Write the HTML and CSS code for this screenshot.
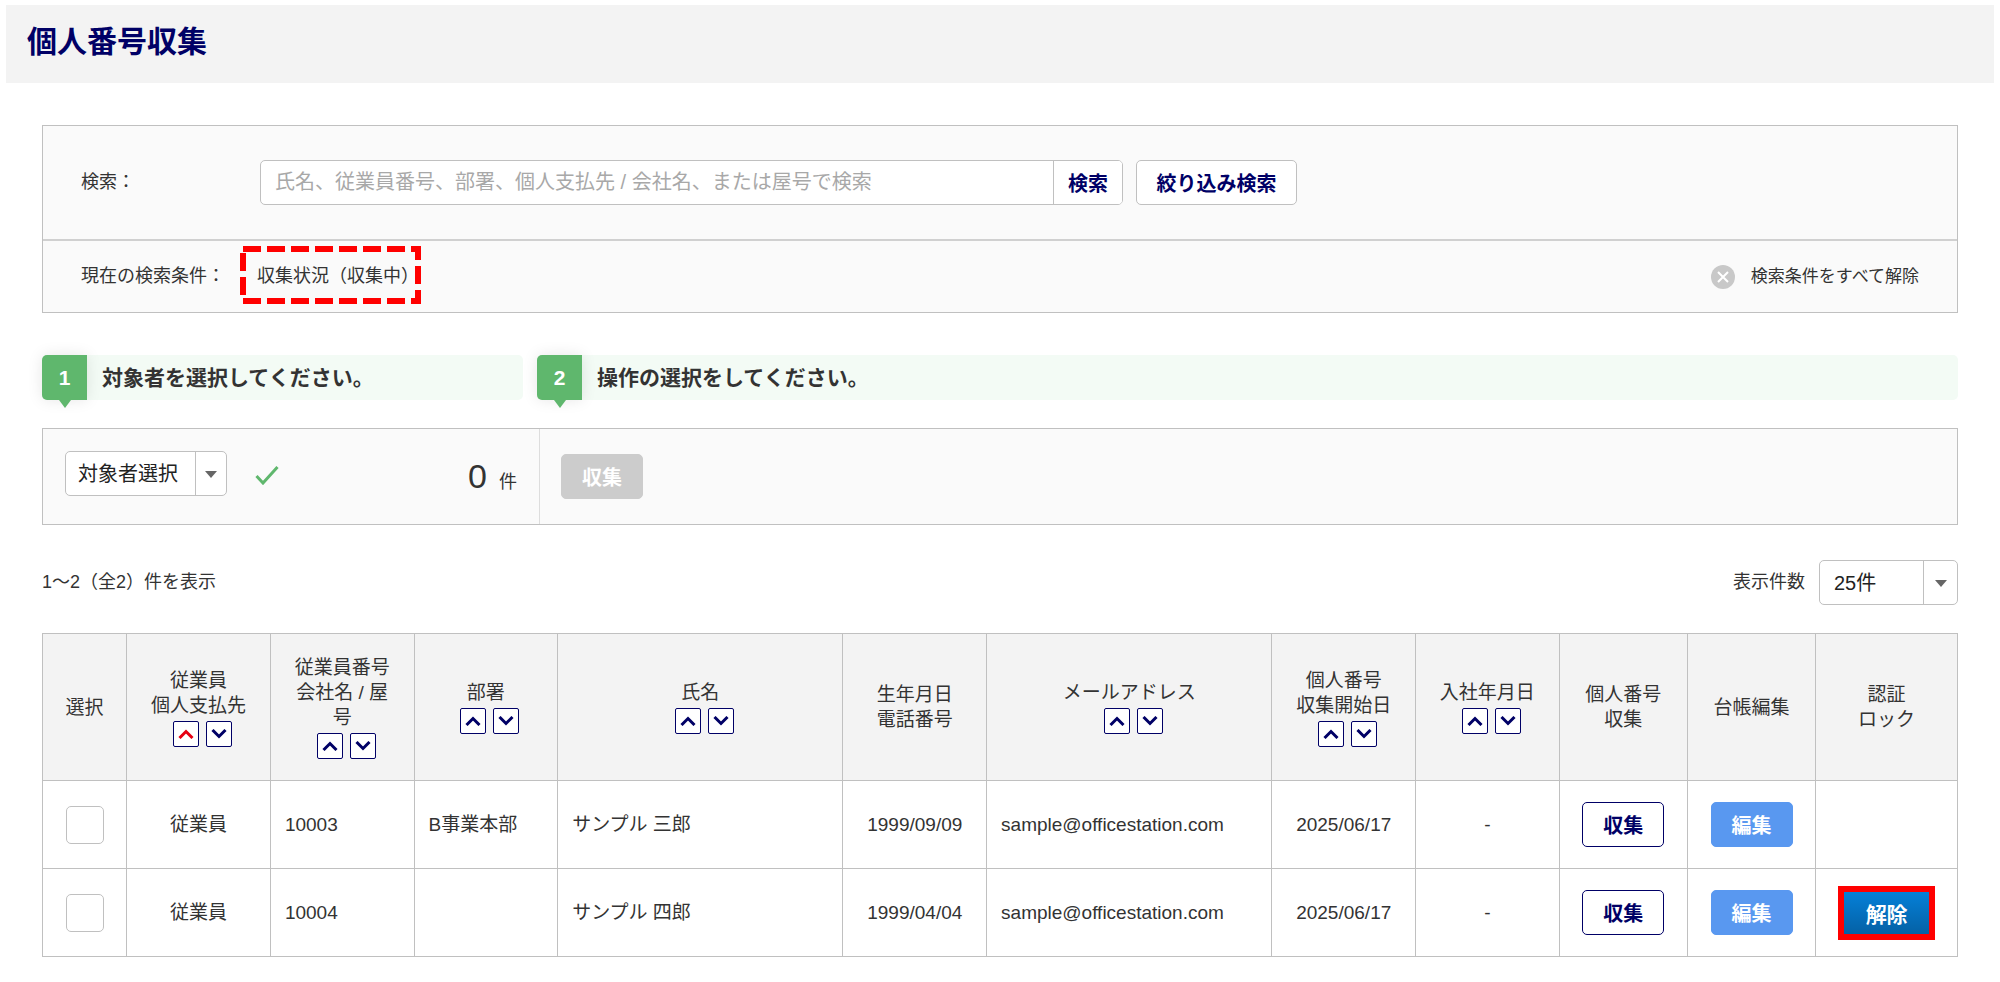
FILE: index.html
```html
<!DOCTYPE html>
<html lang="ja">
<head>
    <meta charset="UTF-8">
    <meta name="viewport" content="width=device-width, initial-scale=1.0">
    <title>個人番号収集</title>
    <link rel="stylesheet" href="styles.css">
</head>
<body>
    <header class="page-header">
        <h1>個人番号収集</h1>
    </header>

    <main class="content">
        <section class="search-box">
            <form class="search-row">
                <label class="search-label" for="keyword">検索：</label>
                <div class="search-group">
                    <input type="text" id="keyword" name="keyword" placeholder="氏名、従業員番号、部署、個人支払先 / 会社名、または屋号で検索">
                    <button type="button" class="search-btn">検索</button>
                </div>
                <button type="button" class="btn filter-btn">絞り込み検索</button>
            </form>
            <div class="condition-row">
                <span class="condition-label">現在の検索条件：</span>
                <span class="condition-value">収集状況（収集中）
                    <svg class="condition-mark" width="181" height="58" viewBox="0 0 181 58" aria-hidden="true">
                        <rect x="3" y="3" width="175" height="52" fill="none" stroke="#f00" stroke-width="6" stroke-dasharray="18 6"/>
                    </svg>
                </span>
                <a href="#" class="clear-link">
                    <svg width="24" height="24" viewBox="0 0 24 24" aria-hidden="true">
                        <circle cx="12" cy="12" r="12" fill="#c8c8c8"/>
                        <path d="M7 7l10 10M17 7L7 17" stroke="#fff" stroke-width="2" fill="none"/>
                    </svg>
                    検索条件をすべて解除
                </a>
            </div>
        </section>

        <div class="steps">
            <div class="step step-target">
                <span class="step-no">1</span>
                <h2>対象者を選択してください。</h2>
            </div>
            <div class="step step-action">
                <span class="step-no">2</span>
                <h2>操作の選択をしてください。</h2>
            </div>
        </div>

        <section class="action-box">
            <div class="action-target">
                <div class="select-wrap target-select">
                    <select name="target" aria-label="対象者選択">
                        <option>対象者選択</option>
                    </select>
                </div>
                <svg class="check" width="24" height="20" viewBox="0 0 24 20" aria-hidden="true">
                    <path d="M1.5 11L8 18L22.5 2" stroke="#5fb76d" stroke-width="3" fill="none"/>
                </svg>
                <p class="count"><span class="count-no">0</span>件</p>
            </div>
            <div class="action-run">
                <button type="button" class="btn btn-disabled" disabled>収集</button>
            </div>
        </section>

        <div class="list-head">
            <p>1〜2（全2）件を表示</p>
            <div class="per-page">
                <label for="perPage">表示件数</label>
                <div class="select-wrap page-select">
                    <select id="perPage" name="perPage">
                        <option>25件</option>
                    </select>
                </div>
            </div>
        </div>

        <!-- arrows shared by the sort buttons -->
        <svg class="symbols" aria-hidden="true">
            <symbol id="up" viewBox="0 0 16 10"><path d="M1.5 9L8 2.5L14.5 9" fill="none" stroke="currentColor" stroke-width="3"/></symbol>
            <symbol id="down" viewBox="0 0 16 10"><path d="M1.5 1L8 7.5L14.5 1" fill="none" stroke="currentColor" stroke-width="3"/></symbol>
        </svg>

        <table class="list">
            <colgroup>
                <col class="col-check">
                <col class="col-s">
                <col class="col-s">
                <col class="col-s">
                <col class="col-l">
                <col class="col-s">
                <col class="col-l">
                <col class="col-s">
                <col class="col-s">
                <col class="col-btn">
                <col class="col-btn">
                <col class="col-lock">
            </colgroup>
            <thead>
                <tr>
                    <th>選択</th>
                    <th>従業員<br>個人支払先
                        <div class="sort">
                            <button type="button" class="active" aria-label="昇順"><svg><use href="#up"/></svg></button>
                            <button type="button" aria-label="降順"><svg><use href="#down"/></svg></button>
                        </div>
                    </th>
                    <th>従業員番号<br>会社名 / 屋号
                        <div class="sort">
                            <button type="button" aria-label="昇順"><svg><use href="#up"/></svg></button>
                            <button type="button" aria-label="降順"><svg><use href="#down"/></svg></button>
                        </div>
                    </th>
                    <th>部署
                        <div class="sort">
                            <button type="button" aria-label="昇順"><svg><use href="#up"/></svg></button>
                            <button type="button" aria-label="降順"><svg><use href="#down"/></svg></button>
                        </div>
                    </th>
                    <th>氏名
                        <div class="sort">
                            <button type="button" aria-label="昇順"><svg><use href="#up"/></svg></button>
                            <button type="button" aria-label="降順"><svg><use href="#down"/></svg></button>
                        </div>
                    </th>
                    <th>生年月日<br>電話番号</th>
                    <th>メールアドレス
                        <div class="sort">
                            <button type="button" aria-label="昇順"><svg><use href="#up"/></svg></button>
                            <button type="button" aria-label="降順"><svg><use href="#down"/></svg></button>
                        </div>
                    </th>
                    <th>個人番号<br>収集開始日
                        <div class="sort">
                            <button type="button" aria-label="昇順"><svg><use href="#up"/></svg></button>
                            <button type="button" aria-label="降順"><svg><use href="#down"/></svg></button>
                        </div>
                    </th>
                    <th>入社年月日
                        <div class="sort">
                            <button type="button" aria-label="昇順"><svg><use href="#up"/></svg></button>
                            <button type="button" aria-label="降順"><svg><use href="#down"/></svg></button>
                        </div>
                    </th>
                    <th>個人番号<br>収集</th>
                    <th>台帳編集</th>
                    <th>認証<br>ロック</th>
                </tr>
            </thead>
            <tbody>
                <tr>
                    <td class="center"><input type="checkbox" name="select" aria-label="10003を選択"></td>
                    <td class="center">従業員</td>
                    <td>10003</td>
                    <td>B事業本部</td>
                    <td>サンプル 三郎</td>
                    <td class="center">1999/09/09</td>
                    <td>sample@officestation.com</td>
                    <td class="center">2025/06/17</td>
                    <td class="center">-</td>
                    <td class="center"><button type="button" class="btn btn-collect">収集</button></td>
                    <td class="center"><button type="button" class="btn btn-edit">編集</button></td>
                    <td></td>
                </tr>
                <tr>
                    <td class="center"><input type="checkbox" name="select" aria-label="10004を選択"></td>
                    <td class="center">従業員</td>
                    <td>10004</td>
                    <td></td>
                    <td>サンプル 四郎</td>
                    <td class="center">1999/04/04</td>
                    <td>sample@officestation.com</td>
                    <td class="center">2025/06/17</td>
                    <td class="center">-</td>
                    <td class="center"><button type="button" class="btn btn-collect">収集</button></td>
                    <td class="center"><button type="button" class="btn btn-edit">編集</button></td>
                    <td class="center"><button type="button" class="btn-unlock">解除</button></td>
                </tr>
            </tbody>
        </table>
    </main>
</body>
</html>
```
FILE: styles.css
```css
* {
    box-sizing: border-box;
}
body {
    margin: 5px 6px;
    font-family: "Liberation Sans", "Noto Sans CJK JP", sans-serif;
    font-size: 18px;
    line-height: 25px;
    color: #333;
    background: #fff;
}
h1, h2, p {
    margin: 0;
}
button, input, select {
    font-family: inherit;
    font-size: 20px;
}
button {
    padding: 0;
    cursor: pointer;
}
.page-header {
    background: #f3f3f3;
    padding: 17px 21px 21px;
}
.page-header h1 {
    font-size: 30px;
    line-height: 40px;
    color: #000066;
}
.content {
    margin: 42px 36px 0;
}

/* search */
.search-box {
    border: 1px solid #c0c0c0;
    background: #fafafa;
}
.search-row {
    display: flex;
    align-items: center;
    height: 115px;
    padding: 0 38px;
    border-bottom: 2px solid #d0d0d0;
}
.search-label {
    width: 179px;
}
.search-group {
    display: flex;
    width: 863px;
    height: 45px;
    margin-right: 13px;
    border: 1px solid #c0c0c0;
    border-radius: 5px;
    background: #fff;
    overflow: hidden;
}
.search-group input {
    flex: 1;
    min-width: 0;
    padding: 0 14px;
    border: none;
    background: none;
}
.search-group input::placeholder {
    color: #a8a8a8;
}
.search-btn {
    width: 69px;
    border: none;
    border-left: 1px solid #c0c0c0;
    background: #fff;
    color: #000066;
    font-weight: bold;
}
.btn {
    width: 82px;
    height: 45px;
    border: 1px solid #c0c0c0;
    border-radius: 5px;
    background: #fff;
    color: #000066;
    font-weight: bold;
}
.filter-btn {
    width: 161px;
}
.condition-row {
    display: flex;
    align-items: center;
    height: 71px;
    padding: 0 38px;
}
.condition-label {
    width: 176px;
}
.condition-value {
    position: relative;
}
.condition-mark {
    position: absolute;
    left: -17px;
    top: -18px;
}
.clear-link {
    display: flex;
    align-items: center;
    gap: 16px;
    margin-left: auto;
    font-size: 17px;
    color: #333;
    text-decoration: none;
}

/* steps */
.steps {
    display: flex;
    gap: 14px;
    margin-top: 42px;
}
.step {
    display: flex;
    align-items: center;
    height: 45px;
    border-radius: 5px;
    background: #f3fbf5;
}
.step-target {
    width: 481px;
}
.step-action {
    flex: 1;
}
.step h2 {
    padding-left: 15px;
    font-size: 21px;
    line-height: 30px;
}
.step-no {
    position: relative;
    width: 45px;
    height: 45px;
    border-radius: 5px 0 0 5px;
    background: #5fb76d;
    box-shadow: 0 0 15px rgba(0,0,0,0.1);
    color: #fff;
    font-size: 21px;
    font-weight: bold;
    line-height: 45px;
    text-align: center;
}
.step-no::after {
    content: "";
    position: absolute;
    left: 17px;
    top: 45px;
    border: 6px solid transparent;
    border-top: 8px solid #5fb76d;
    border-bottom: none;
}

/* action */
.action-box {
    display: flex;
    height: 97px;
    margin-top: 28px;
    border: 1px solid #c0c0c0;
    background: #fafafa;
}
.action-target {
    display: flex;
    align-items: flex-start;
    width: 497px;
    padding: 22px 22px 0;
    border-right: 1px solid #ddd;
}
.action-run {
    padding: 25px 21px;
}
.select-wrap {
    position: relative;
    height: 45px;
    border: 1px solid #c0c0c0;
    border-radius: 5px;
    background: #fff;
}
.select-wrap select {
    appearance: none;
    width: 100%;
    height: 100%;
    padding: 0 12px;
    border: none;
    background: none;
    color: #222;
}
.select-wrap::before {
    content: "";
    position: absolute;
    top: 0;
    right: 0;
    width: 30px;
    height: 100%;
    border-left: 1px solid #c0c0c0;
    pointer-events: none;
}
.select-wrap::after {
    content: "";
    position: absolute;
    top: 19px;
    right: 9px;
    border: 6px solid transparent;
    border-top: 7px solid #666;
    border-bottom: none;
    pointer-events: none;
}
.target-select {
    width: 162px;
}
.check {
    margin: 14px 0 0 28px;
}
.count {
    display: flex;
    align-items: baseline;
    gap: 12px;
    margin: 5px 0 0 auto;
}
.count-no {
    font-size: 34px;
    line-height: 40px;
}
.btn-disabled {
    border-color: #ccc;
    background: #ccc;
    color: #fff;
    cursor: default;
}
.list-head {
    display: flex;
    align-items: center;
    justify-content: space-between;
    margin: 35px 0 28px;
}
.per-page {
    display: flex;
    align-items: center;
    gap: 14px;
}
.page-select {
    width: 139px;
}
.page-select select {
    padding: 0 14px;
}
.page-select::before {
    width: 33px;
}
.page-select::after {
    right: 10px;
}

/* list */
.symbols {
    display: none;
}
.list {
    width: 100%;
    border-collapse: collapse;
    table-layout: fixed;
    font-size: 19px;
}
.list th, .list td {
    border: 1px solid #c0c0c0;
    padding: 0 14px;
    text-align: left;
}
.list th {
    height: 147px;
    padding: 0 18px;
    background: #f3f3f3;
    font-weight: normal;
    text-align: center;
}
.list td {
    height: 88px;
}
.list .center {
    padding: 0;
    text-align: center;
}
.col-check {
    width: 4.4%;
}
.col-s {
    width: 7.5%;
}
.col-l {
    width: 14.9%;
}
.col-btn {
    width: 6.7%;
}
.sort {
    display: flex;
    justify-content: center;
    gap: 7px;
    padding: 3px 0 0 8px;
}
.sort button {
    display: flex;
    align-items: center;
    justify-content: center;
    width: 26px;
    height: 26px;
    border: 1px solid #000066;
    border-radius: 2px;
    background: #fff;
    color: #000066;
}
.sort .active {
    color: #e60012;
}
.sort svg {
    width: 16px;
    height: 10px;
}
.list input[type="checkbox"] {
    appearance: none;
    display: block;
    width: 38px;
    height: 38px;
    margin: 0 auto;
    border: 1px solid #c0c0c0;
    border-radius: 5px;
    background: #fff;
}
.list .btn {
    display: block;
    margin: 0 auto;
}
.list .btn-collect {
    border-color: #000066;
}
.list .btn-edit {
    border-color: #5998f0;
    background: #5998f0;
    color: #fff;
}
.btn-unlock {
    display: block;
    width: 97px;
    height: 54px;
    margin: 0 auto;
    border: 6px solid #f00;
    background: linear-gradient(#0580d8, #0561a5);
    background-clip: padding-box;
    color: #fff;
    font-size: 21px;
    font-weight: bold;
}
```
